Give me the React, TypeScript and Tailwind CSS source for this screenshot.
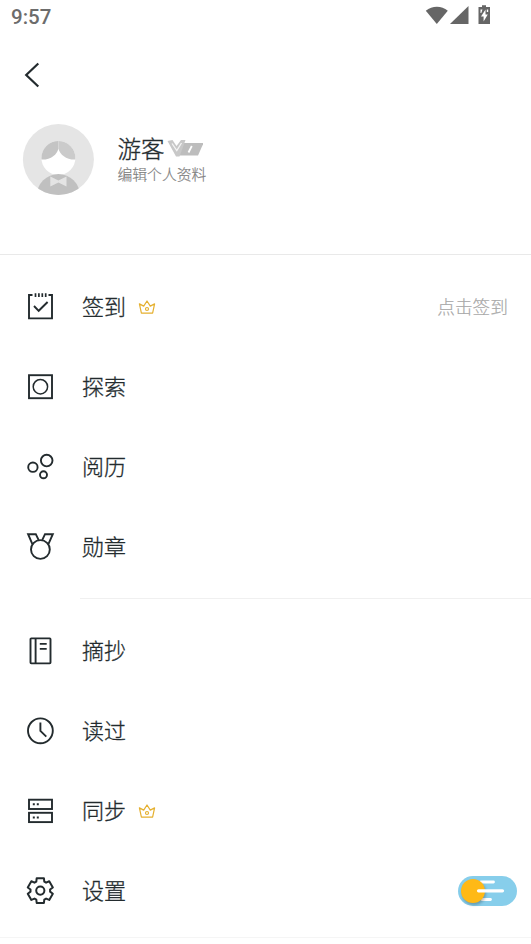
import React from 'react';

type IconProps = { children: React.ReactNode };

const Icon: React.FC<IconProps> = ({ children }) => (
  <svg className="w-8 h-8 shrink-0" viewBox="0 0 32 32" fill="none" stroke="#232b2e" strokeWidth={1.9}>
    {children}
  </svg>
);

// Six teeth, each one given by four corners relative to the gear's centre
const gearPoints = [0, 60, 120, 180, 240, 300]
  .flatMap(deg => {
    const a = (deg * Math.PI) / 180;
    const corners = [[-4, -9], [-3.6, -12.4], [3.6, -12.4], [4, -9]];
    return corners.map(([x, y]) => {
      const px = 16 + x * Math.cos(a) - y * Math.sin(a);
      const py = 16 + x * Math.sin(a) + y * Math.cos(a);
      return `${px.toFixed(2)},${py.toFixed(2)}`;
    });
  })
  .join(' ');

const CheckInIcon = () => (
  <Icon>
    <path d="M8.5 5H5V28.4H28V5H24.5" />
    <path d="M11.5 3.2V7M14.9 3.2V7M18.3 3.2V7M21.7 3.2V7" strokeWidth={1.7} />
    <path d="M10 16L14.700 20.800L23.600 12" />
  </Icon>
);

const ExploreIcon = () => (
  <Icon>
    <rect x={5} y={5.2} width={23} height={23} />
    <circle cx={16.4} cy={16.7} r={7.2} strokeWidth={1.5} />
  </Icon>
);

const HistoryIcon = () => (
  <Icon>
    <circle cx={22.7} cy={10.6} r={5.8} />
    <circle cx={8.9} cy={17.2} r={4.7} />
    <circle cx={19.5} cy={24.8} r={3.5} />
  </Icon>
);

const MedalIcon = () => (
  <Icon>
    <circle cx={16.4} cy={19.5} r={9.4} />
    <path d="M8.5 14.3L4.1 4.2H11.8L14.7 10.2M24.3 14.3L28.8 4.2H21L18.2 10.2" />
  </Icon>
);

const NotebookIcon = () => (
  <Icon>
    <rect x={6.5} y={4.4} width={20} height={25} rx={0.8} />
    <path d="M11.6 4.4V29.4" />
    <path d="M15.8 9.9H22.7M15.8 14.8H22.7" strokeWidth={1.7} />
  </Icon>
);

const ClockIcon = () => (
  <Icon>
    <circle cx={16.4} cy={16.8} r={12.4} />
    <path d="M16.4 8.4V16.9L22.3 22.6" />
  </Icon>
);

const ServerIcon = () => (
  <Icon>
    <rect x={5} y={5.7} width={23} height={9.3} />
    <rect x={5} y={18.8} width={23} height={9.3} />
    <path d="M8.8 10.2H10.8M12.8 10.2H14.8M8.8 23.500H10.8M12.8 23.500H14.8" />
  </Icon>
);

const GearIcon = () => (
  <Icon>
    <g transform="translate(.3 .6)">
      <polygon points={gearPoints} strokeWidth={2} strokeLinejoin="round" />
      <circle cx={16} cy={16} r={4.1} strokeWidth={2} />
    </g>
  </Icon>
);

const Crown = () => (
  <svg className="w-[18px] h-4 ml-3 mt-px" viewBox="0 0 18 16" fill="none" stroke="#e5b02f" strokeWidth={1.2}>
    <path d="M3.4 14.2L1.4 4.9L5.7 7.1L9 2L12.3 7.1L16.6 4.9L14.6 14.2Z" strokeLinejoin="round" />
    <circle cx={9} cy={10} r={1.5} />
  </svg>
);

const Avatar = () => (
  <svg className="w-[72px] h-[72px]" viewBox="0 0 72 72">
    <defs>
      <clipPath id="avatar"><circle cx={36.4} cy={35.5} r={35.5} /></clipPath>
      <clipPath id="face"><circle cx={36.4} cy={34} r={17} /></clipPath>
    </defs>
    <circle cx={36.4} cy={35.5} r={35.5} fill="#e5e5e5" />
    <g clipPath="url(#avatar)">
      <circle cx={36.4} cy={34} r={17} fill="#fff" />
      <circle cx={36.4} cy={71.500} r={21.5} fill="#c0c0c0" />
      <g clipPath="url(#face)">
        <path d="M18 16H36.400V24.500C35 31 28 36.500 18 35.500Z" fill="#c4c4c4" />
        <path d="M36.400 16H55V35.500C45 36.500 38 31 36.400 24.500Z" fill="#cbcbcb" />
      </g>
      <path d="M28.300 52.500L36.400 56.500V58.500L28.300 62.500ZM44.500 52.500L36.400 56.500V58.500L44.500 62.500Z" fill="#e4e4e4" />
    </g>
  </svg>
);

const VipBadge = () => (
  <svg className="w-9 h-[18px] ml-0.5" viewBox="0 0 36 18">
    <path d="M16 4H36.500L31 16.500H11Z" fill="#bdbdbd" />
    <path d="M.5 2L5.500 1L9.500 7L14 1H18.500L12.500 17.500H9Z" fill="#c8c8c8" />
    <path d="M5 4.500L9.800 11.500L14.500 4" fill="none" stroke="#f4f4f4" strokeWidth={1.300} />
    <path d="M24.800 7L21.500 13.500" stroke="#fff" strokeWidth={1.800} />
  </svg>
);

const DayToggle = () => (
  <button className="relative w-[59px] h-[30px] rounded-full bg-[#87ceeb]">
    <svg className="absolute inset-0" width={59} height={30} viewBox="0 0 59 30" stroke="#fff" strokeLinecap="round">
      <path d="M23 6H35.5M24 23.5H32.5" strokeWidth={2.8} />
    </svg>
    <span className="absolute left-[3px] top-[3px] w-6 h-6 rounded-full bg-[#ffb916] shadow-[1px_2px_3px_rgba(0,0,0,0.25)]" />
    <svg className="absolute inset-0" width={59} height={30} viewBox="0 0 59 30" stroke="#fff" strokeLinecap="round">
      <path d="M20.5 14.8H44.5" strokeWidth={3.2} />
    </svg>
  </button>
);

const Row: React.FC<{ icon: React.ReactNode; label: string; vip?: boolean; children?: React.ReactNode }> = ({ icon, label, vip, children }) => (
  <div className="h-20 flex items-center pl-6">
    {icon}
    <span className="ml-[26px] mb-0.5 text-[22px] leading-8 [-webkit-text-stroke:0.3px]">{label}</span>
    {vip && <Crown />}
    <div className="ml-auto flex items-center">{children}</div>
  </div>
);

export default function App() {
  return (
    <div className="w-full min-h-[944px] bg-white text-[#232b2e] font-['Noto_Sans_CJK_SC',sans-serif] font-light">
      <div className="h-8 flex items-center justify-between pl-[11px] pr-10">
        <span className="mt-0.5 font-[Roboto,sans-serif] font-medium text-[20.5px] leading-8 text-[#6c6c6c]">9:57</span>
        <svg width={66} height={20} viewBox="0 0 66 20" fill="#666" className="mb-0.5">
          <path d="M0.8 5.7C7.300 .5 16.500 .5 22.800 5.700L11.800 19Z" />
          <path d="M43.500 1V19H25Z" />
          <path d="M57 .2H61V2H65V19H53.500V2H57Z" />
          <path d="M60.500 4.500L56 11.500H58.600V16.500L62.800 9.500H60.500ZM55.500 4.500H57.500L56.300 8H55.500ZM61.800 4.500H63.200V7H61.800Z" fill="#fff" />
        </svg>
      </div>

      <div className="h-[92px] pt-[30px] pl-6">
        <svg width={18} height={26} viewBox="0 0 18 26" fill="none" stroke="#232b2e" strokeWidth={2.2}>
          <path d="M14.300 1.500L2.200 13L14.300 24.500" />
        </svg>
      </div>

      <div className="h-[131px] flex items-start pl-[22px] border-b border-[#e9e9e9]">
        <Avatar />
        <div className="ml-[23.5px] pt-[7px]">
          <div className="flex items-center h-[34px]">
            <span className="text-[23.5px] leading-[34px] [-webkit-text-stroke:0.3px]">游客</span>
            <VipBadge />
          </div>
          <div className="text-[14.8px] leading-[18px] text-[#808080] [-webkit-text-stroke:0.2px]">编辑个人资料</div>
        </div>
      </div>

      <div className="pt-[11px] pb-3">
        <Row icon={<CheckInIcon />} label="签到" vip>
          <span className="mr-[23px] text-[17.7px] text-[#a8a8a8] [-webkit-text-stroke:0.2px]">点击签到</span>
        </Row>
        <Row icon={<ExploreIcon />} label="探索" />
        <Row icon={<HistoryIcon />} label="阅历" />
        <Row icon={<MedalIcon />} label="勋章" />
      </div>

      <div className="ml-20 h-px bg-[#f0f0f0]" />

      <div className="pt-[11px] pb-[7px] border-b border-[#f5f5f5]">
        <Row icon={<NotebookIcon />} label="摘抄" />
        <Row icon={<ClockIcon />} label="读过" />
        <Row icon={<ServerIcon />} label="同步" vip />
        <Row icon={<GearIcon />} label="设置">
          <div className="mr-[14px] mt-0.5 flex"><DayToggle /></div>
        </Row>
      </div>
    </div>
  );
}
